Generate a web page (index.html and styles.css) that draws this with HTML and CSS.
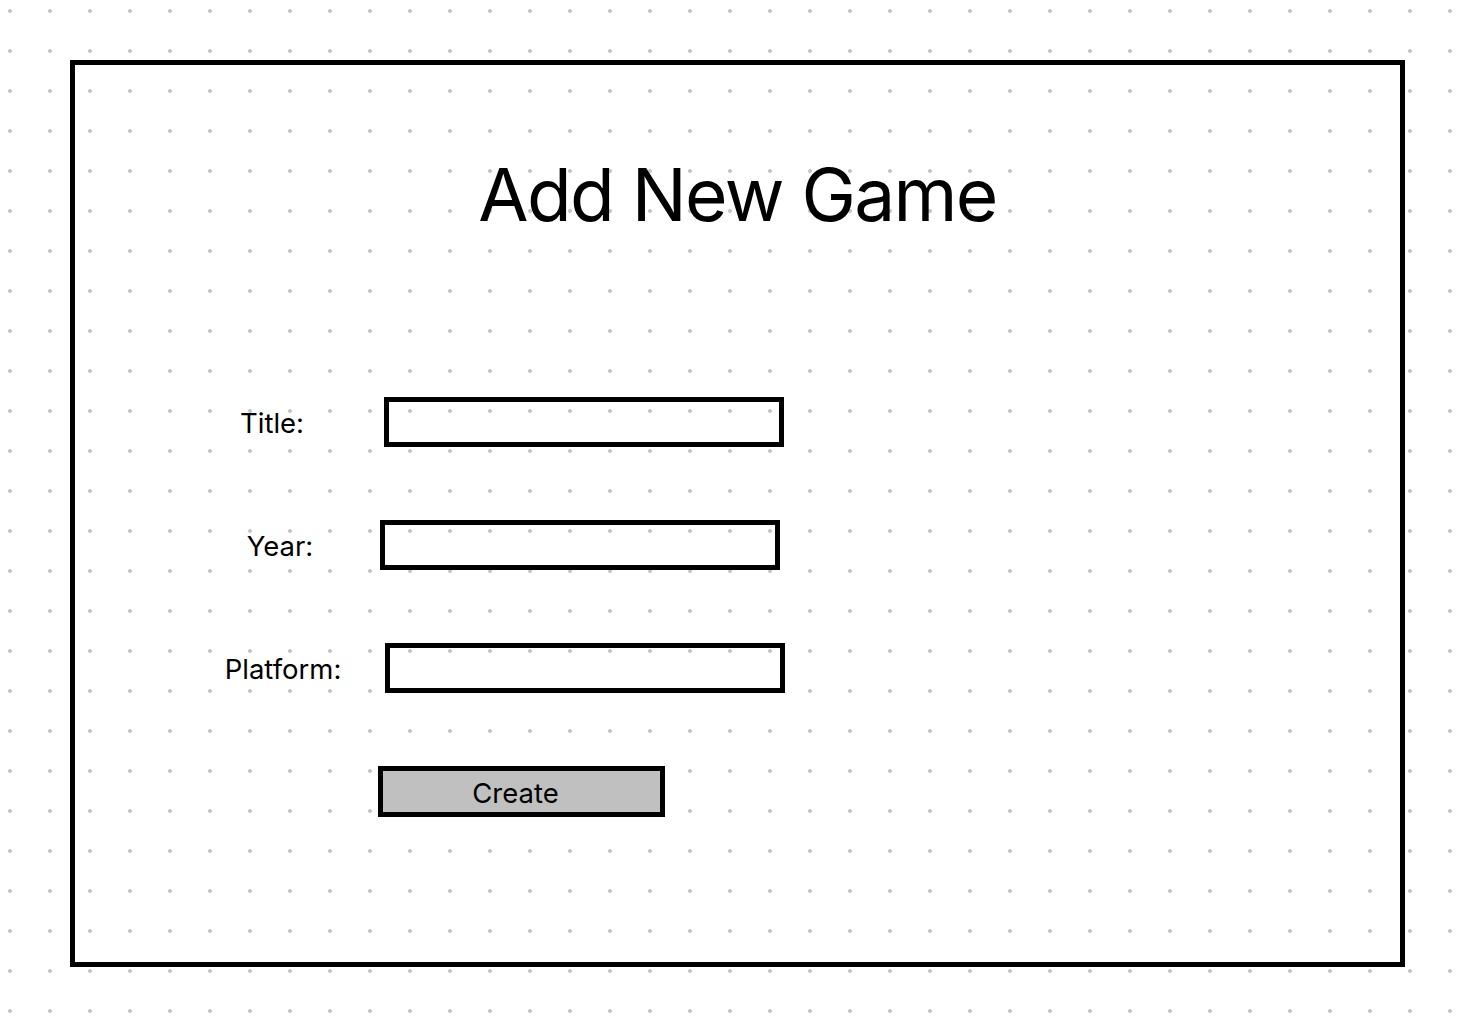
FILE: index.html
```html
<!DOCTYPE html>
<html lang="en">
<head>
  <meta charset="UTF-8" />
  <meta name="viewport" content="width=device-width, initial-scale=1.0" />
  <title>Add New Game</title>
  <link rel="stylesheet" href="styles.css">
</head>
<body>
  <div class="frame">
    <h1>Add New Game</h1>
    <form class="game-form" onsubmit="return false">
      <div class="row row-title">
        <label for="title">Title:</label>
        <input id="title" type="text" />
      </div>
      <div class="row row-year">
        <label for="year">Year:</label>
        <input id="year" type="text" />
      </div>
      <div class="row row-platform">
        <label for="platform">Platform:</label>
        <input id="platform" type="text" />
      </div>
      <div class="row row-action">
        <span></span>
        <button type="submit">Create</button>
      </div>
    </form>
  </div>
</body>
</html>
```

FILE: styles.css
```css
* {
  box-sizing: border-box;
}

body {
  margin: 0;
  min-height: 100vh;
  font-family: Inter, 'Noto Sans', sans-serif;
  color: #000;
  background-color: #fff;
  background-image: radial-gradient(circle at center, #c8c8c8 0, #c8c8c8 1.7px, transparent 2.3px);
  background-size: 40px 40px;
  background-position: -10px -9px;
  overflow: hidden;
}

.frame {
  width: 1335px;
  height: 907px;
  margin: 60px 0 0 70px;
  border: 5px solid #000;
}

h1 {
  margin: 93px 0 0;
  font-size: 73px;
  font-weight: 400;
  line-height: 1;
  text-align: center;
  letter-spacing: -1.7px;
}

.game-form {
  display: flex;
  flex-direction: column;
  gap: 73px;
  margin-top: 166px;
}

.row {
  display: flex;
  align-items: center;
  height: 50px;
}

.row label,
.row span {
  width: 150px;
  margin-left: 130px;
  padding-top: 2px;
  font-size: 27.5px;
  text-align: center;
}

.row input {
  width: 400px;
  height: 50px;
  margin-left: 29px;
  border: 5px solid #000;
  background: transparent;
  font: inherit;
  font-size: 24px;
  padding: 0 10px;
}

.row-title label { margin-left: 122px; }
.row-title input { margin-left: 37px; }

.row-year input { margin-left: 25px; }

.row-platform label { margin-left: 133px; }
.row-platform input { margin-left: 27px; }

.row-action { height: 51px; }

.row-action button {
  width: 287px;
  height: 51px;
  margin-left: 23px;
  padding: 2px 12px 0 0;
  border: 5px solid #000;
  background: #c0c0c0;
  font-family: inherit;
  font-size: 27.5px;
  color: #000;
  cursor: pointer;
}
```
